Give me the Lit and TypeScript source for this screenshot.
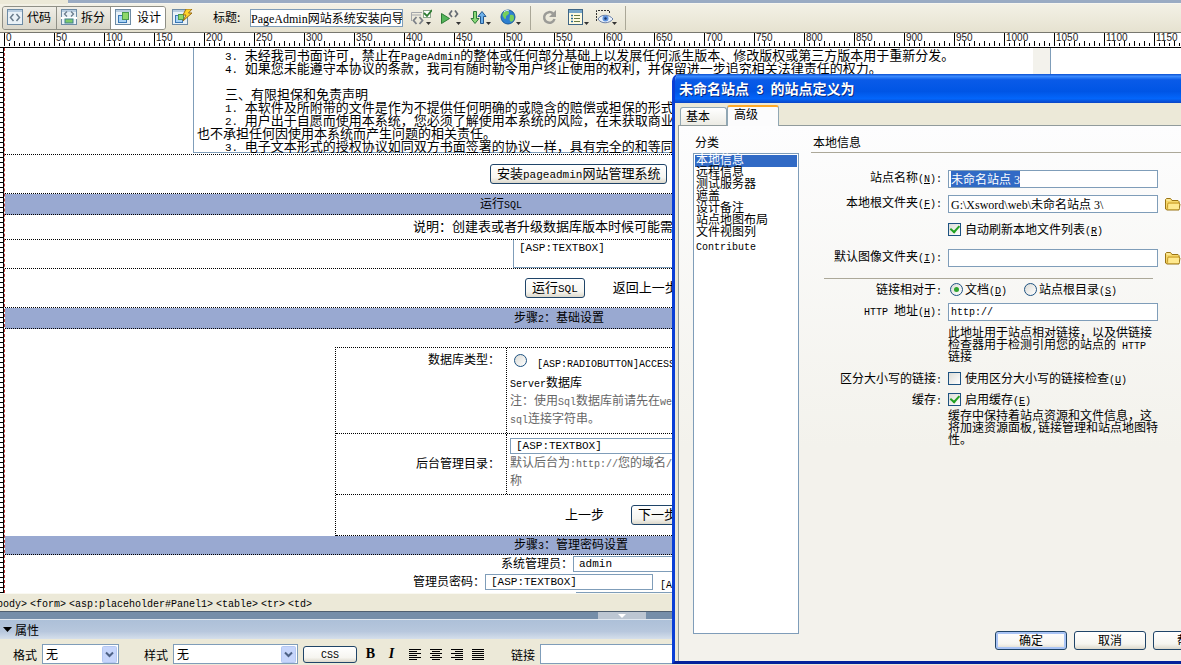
import { LitElement, html, svg, css } from 'lit';
import { customElement, property } from 'lit/decorators.js';

/* Wraps half-width runs so they can be set in the narrow monospaced face. */
const t = (text: string) =>
  html`<span>${text
    .split(/([\x20-\x7e]+)/)
    .map((part) => (/^[\x20-\x7e]+$/.test(part) ? html`<span class="m">${part}</span>` : part))}</span>`;

const key = (text: string, letter: string, tail = '') =>
  html`<span>${t(text)}<span class="m">(<u>${letter}</u>)${tail}</span></span>`;

const base = css`
  * { box-sizing: border-box; }
  .m { font-family: 'Liberation Mono', monospace; font-size: var(--mono, 10px); line-height: 0; white-space: pre; }
  button, input, select, textarea { font: inherit; color: inherit; margin: 0; border-radius: 0; outline: none; }
  svg { display: block; flex: none; }
  .field {
    border: 1px solid #7f9db9; background: #fff; padding: 0 2px; min-width: 0;
    font-family: 'Liberation Mono', 'Noto Sans CJK SC', monospace;
  }
  .mixed { font-family: 'Liberation Serif', 'Noto Sans CJK SC', serif; }
  .push {
    border: 1px solid #1f4468; border-radius: 3px; padding: 0 6px 4px; white-space: nowrap; overflow: hidden;
    background: linear-gradient(#fff, #f6f5f0 70%, #dcd8cb);
  }
`;

const arrow = html`<svg class="arrow" width="15" height="17" viewBox="0 0 15 17" aria-hidden="true">
  <rect x=".5" y=".5" width="14" height="16" rx="1" fill="#c6d5fb" stroke="#b5c8f2" />
  <path d="M4 6.5l3.5 3.5L11 6.5" fill="none" stroke="#4d6185" stroke-width="2" />
</svg>`;

const pageFrame = svg`<rect x=".5" y=".5" width="15" height="15" fill="#e9f1f7" stroke="#6d8ba5"/><path d="M1 2h14" stroke="#b8cde0" stroke-width="2"/>`;
const drop = svg`<path d="M16 13h5l-2.500 3z" fill="#333"/>`;

const icons: Record<string, unknown> = {
  code: svg`${pageFrame}<path d="M6.500 5L3.500 8.500l3 3.500M9.500 5l3 3.500-3 3.500" fill="none" stroke="#6a7c8c" stroke-width="1.500"/>`,
  split: svg`${pageFrame}<path d="M6 2.500L3.500 5 6 7.500M10 2.500L12.500 5 10 7.500" fill="none" stroke="#6a7c8c" stroke-width="1.300"/><rect x="0" y="8" width="16" height="2" fill="#fff"/><rect x="4" y="10" width="8" height="4" fill="#7ecb6b" stroke="#3d7f8c"/>`,
  design: svg`${pageFrame}<rect x="3.500" y="6.500" width="8" height="7" fill="#a9d3f5" stroke="#3a78b5"/><rect x="7.500" y="3.500" width="6" height="7" fill="#8fd86a" stroke="#4b9a4c"/>`,
  live: svg`${pageFrame}<rect x="3.500" y="6.500" width="7" height="7" fill="#a9d3f5" stroke="#3a78b5"/><rect x="6.500" y="5.500" width="5" height="5" fill="#8fd86a" stroke="#4b9a4c"/><path d="M14 0h6l-3.500 4H20l-9 8 3-6h-3z" fill="#ffd42a" stroke="#9a6b12"/>`,
  validate: svg`<path d="M1.500 12V3.500H12M1 6h10" fill="none" stroke="#a4a7ab"/><path d="M6.500 8L3.500 11.500l3 3.500M9.500 8l3 3.500-3 3.500" fill="none" stroke="#7d8288" stroke-width="1.800"/><rect x="13.500" y="1.500" width="7" height="7" fill="#fff" stroke="#8ba48b"/><path d="M14 4l3 3 5-6" fill="none" stroke="#2f7d32" stroke-width="1.800"/>${drop}`,
  run: svg`<path d="M1.500 4.500v10l8-5z" fill="#55b65a" stroke="#2c7a35"/><path d="M12 1.500L9.500 5l2.500 3M15 1.500L17.500 5 15 8" fill="none" stroke="#666c73" stroke-width="1.700"/>${drop}`,
  sync: svg`<path d="M3.500 2.500h3v7H9l-4 5-4-5h2.500z" fill="#8ad977" stroke="#2e7b3a"/><path d="M10.500 14.500v-7H8l4-5 4 5h-2.500v7z" fill="#6db1ea" stroke="#23578f"/>${drop}`,
  globe: svg`<circle cx="8" cy="8" r="7" fill="#2d7fd0" stroke="#185a9c"/><path d="M3 4c3-3 6-2 6 0S6 6 6 8s-1 3-2 1-2-2-1-5zM10 6c3-1 4 0 4 3s-3 5-4 3 0-3 0-6z" fill="#76cf5b"/><path d="M4 3c2-2 4-2 5-1" stroke="#d8f0ff" fill="none"/>${drop}`,
  refresh: svg`<path d="M11 4.500A5.300 5.300 0 1 0 12.500 10" fill="none" stroke="#9b9b97" stroke-width="2.500"/><path d="M14 1v7H7z" fill="#9b9b97"/>`,
  options: svg`<rect x=".5" y=".5" width="14" height="15" fill="#fffbe0" stroke="#3f6686"/><rect x="1" y="1" width="13" height="3" fill="#77a6c9"/><path d="M3 6.500h2M3 9.500h2M3 12.500h2" stroke="#2c6c9a" stroke-width="1.500"/><path d="M6 6.500h6M6 9.500h6M6 12.500h6" stroke="#687b45"/>${drop}`,
  eye: svg`<path d="M.5 12V1.500h13V5" fill="none" stroke="#333" stroke-dasharray="2 1"/><path d="M2 10c3-5 11-5 15 0-4 5-12 5-15 0z" fill="#e9f1fb" stroke="#6a7fa5"/><circle cx="9.500" cy="9.500" r="3" fill="#5f93dd"/><circle cx="9.500" cy="9.500" r="1.200" fill="#19376b"/>${drop}`,
};

const icon = (name: string, w = 22) =>
  html`<svg width=${w} height="17" viewBox="0 0 ${w} 17" aria-hidden="true">${icons[name]}</svg>`;

@customElement('document-toolbar')
class DocumentToolbar extends LitElement {
  static styles = [base, css`
    :host { display: block; flex: none; background: #ece9d8; font-size: 12px; }
    .strip { height: 4px; margin-left: 68px; background: #9aabc3; border-bottom: 1px solid #f7f6ef; }
    .bar { display: flex; align-items: center; height: 29px; padding: 0 0 1px 2px; border-bottom: 1px solid #77776f; background: linear-gradient(#f3f1e6, #e6e2d0); }
    .views { display: flex; height: 24px; border: 1px solid #8f8f86; border-radius: 3px; overflow: hidden; }
    .view { display: flex; align-items: center; gap: 4px; width: 54px; padding: 0 0 0 4px; border: 0; border-right: 1px solid #8f8f86; background: linear-gradient(#f0eee7, #d9d6ca); white-space: nowrap; }
    .view:last-child { border-right: 0; }
    .on { background: #fff; gap: 6px; }
    .caption { padding-bottom: 2px; }
    .tool { border: 0; background: none; padding: 0; }
    .live { margin-left: 6px; }
    .title { margin: 0 8px 0 19px; padding-bottom: 2px; width: 29px; white-space: nowrap; }
    .name { width: 153px; height: 18px; padding: 0; line-height: 16px; }
    .tools { display: flex; gap: 8px; margin-left: 7px; }
    .rule { width: 1px; height: 24px; background: #aaa797; }
    .one { margin: 0 4px 0 8px; }
    .right { margin-left: 10px; gap: 6px; }
    .end { margin-left: 7px; }
  `];
  render() {
    return html`
      <div class="strip"></div>
      <div class="bar">
        <div class="views">
          <button class="view">${icon('code', 16)}<span class="caption">代码</span></button>
          <button class="view">${icon('split', 16)}<span class="caption">拆分</span></button>
          <button class="view on">${icon('design', 16)}<span class="caption">设计</span></button>
        </div>
        <button class="tool live" aria-label="Live">${icon('live')}</button>
        <label class="title" for="title">标题:</label>
        <input id="title" class="field mixed name" value="PageAdmin网站系统安装向导" />
        <div class="tools">
          ${['validate', 'run', 'sync', 'globe'].map((n) => html`<button class="tool" aria-label=${n}>${icon(n)}</button>`)}
        </div>
        <span class="rule one"></span>
        <div class="tools">
          <button class="tool" aria-label="refresh">${icon('refresh', 16)}</button>
        </div>
        <div class="tools right">
          ${['options', 'eye'].map((n) => html`<button class="tool" aria-label=${n}>${icon(n)}</button>`)}
        </div>
        <span class="rule end"></span>
      </div>`;
  }
}

@customElement('pixel-ruler')
class PixelRuler extends LitElement {
  static styles = [base, css`
    :host { display: flex; flex: none; height: 14px; padding-left: 4px; overflow: hidden; background: #fff; border-bottom: 1px solid #000; }
    .step {
      flex: none; width: 50px; height: 13px; padding-left: 1px; border-left: 1px solid #000;
      font: 10px/10px 'Liberation Sans', sans-serif; color: #222;
      background:
        repeating-linear-gradient(90deg, transparent 0 9px, #000 9px 10px) 0 100% / 49px 5px no-repeat,
        repeating-linear-gradient(90deg, transparent 0 4px, #000 4px 5px) 0 100% / 49px 3px no-repeat;
    }
  `];
  render() {
    return html`${Array.from({ length: 24 }, (_, i) => html`<span class="step">${i * 50}</span>`)}`;
  }
}

@customElement('design-page')
class DesignPage extends LitElement {
  static styles = [base, css`
    :host { display: flex; flex: 1; min-height: 0; overflow: hidden; background: #fff; font-size: 12px; }
    .side { flex: none; width: 4px; border-right: 1px solid #000; background: repeating-linear-gradient(transparent 0 4px, #000 4px 5px); }
    .page { flex: 1; min-width: 0; border-left: 1px dashed #b33; margin-right: -1px; }
    .row { display: flex; align-items: center; border-bottom: 1px dotted #000; white-space: nowrap; overflow: hidden; }
    .big { font-size: 13px; --mono: 11px; }
    .first { height: 107px; align-items: flex-start; padding: 0 131px 0 188px; }
    .licence { flex: 1; display: flex; border: 1px solid #7f9db9; border-top: 0; height: 105px; padding-left: 3px; line-height: 13px; }
    .lines { flex: 1; min-width: 0; }
    .lines p { margin: 0; height: 13px; }
    .lines .in { padding-left: 28px; }
    .scroll { width: 17px; background: #f3f2ec; }
    .tall { height: 39px; gap: 28px; }
    .push { height: 20px; line-height: 16px; }
    .band { height: 21px; padding-bottom: 4px; background: #99a9d1; }
    .last { height: 19px; }
    .note { height: 25px; padding: 0 0 4px 408px; }
    .boxrow { height: 29px; padding-left: 508px; align-items: stretch; }
    .area { width: 400px; resize: none; overflow: hidden; padding: 0 5px; border-top: 0; font-size: 11px; line-height: 16px; }
    .setup { margin-left: 330px; margin-top: 18px; border: 1px dotted #000; border-width: 1px 0 0 1px; }
    .pair { display: grid; grid-template-columns: 171px 1fr; border-bottom: 1px dotted #000; line-height: 18px; white-space: nowrap; }
    .name { text-align: right; padding: 2px 6px 0 0; border-right: 1px dotted #000; }
    .mid { align-self: stretch; display: flex; align-items: center; justify-content: flex-end; padding: 0 6px 2px 0; }
    .body { padding: 4px 0 0 3px; }
    .kind { height: 86px; }
    .kind .body { padding-top: 0; }
    .dir { height: 61px; }
    .grey { color: #666; }
    .choice { display: flex; align-items: center; gap: 10px; height: 25px; padding-left: 4px; }
    .choice span { padding-top: 2px; }
    .line { height: 18px; }
    .radio { appearance: none; width: 13px; height: 13px; border: 1px solid #1d5281; border-radius: 50%; background: linear-gradient(135deg, #dcdcd7, #fff); }
    .next { height: 41px; padding-left: 229px; gap: 27px; }
    .text { font-size: 11px; height: 16px; line-height: 14px; padding: 0 5px; }
    .dir .text { display: block; width: 300px; margin-bottom: -1px; }
    .form { display: flex; align-items: center; height: 18px; white-space: nowrap; overflow: hidden; }
    .form > label, a { padding-bottom: 4px; }
    .user { padding-left: 496px; }
    .pass { padding-left: 408px; }
    .pass .text { width: 168px; margin-right: 7px; }
    .again { padding-left: 571px; }
    .p1 { padding-left: 485px; }
    .p2 { padding-left: 475px; }
    .p3 { padding-left: 520px; }
    .p4 { padding-left: 509px; }
    a { color: inherit; text-decoration: none; }
  `];
  render() {
    return html`
      <div class="side"></div>
      <div class="page">
        <div class="row first big">
          <div class="licence">
            <div class="lines">
              <p class="in">${t('3. 未经我司书面许可，禁止在PageAdmin的整体或任何部分基础上以发展任何派生版本、修改版权或第三方版本用于重新分发。')}</p>
              <p class="in">${t('4. 如果您未能遵守本协议的条款，我司有随时勒令用户终止使用的权利，并保留进一步追究相关法律责任的权力。')}</p>
              <p></p>
              <p class="in">三、有限担保和免责声明</p>
              <p class="in">${t('1. 本软件及所附带的文件是作为不提供任何明确的或隐含的赔偿或担保的形式')}</p>
              <p class="in">${t('2. 用户出于自愿而使用本系统，您必须了解使用本系统的风险，在未获取商业')}</p>
              <p>也不承担任何因使用本系统而产生问题的相关责任。</p>
              <p class="in">${t('3. 电子文本形式的授权协议如同双方书面签署的协议一样，具有完全的和等同')}</p>
            </div>
            <div class="scroll"></div>
          </div>
        </div>
        <div class="row tall big p1"><button class="push">${t('安装pageadmin网站管理系统')}</button></div>
        <div class="row band p2">${t('运行SQL')}</div>
        <div class="row note big">说明：创建表或者升级数据库版本时候可能需</div>
        <div class="row boxrow"><textarea class="field area" aria-label="SQL">[ASP:TEXTBOX]</textarea></div>
        <div class="row tall big p3"><button class="push">${t('运行SQL')}</button><a href="#">返回上一步</a></div>
        <div class="row band p4">${t('步骤2：基础设置')}</div>
        <div class="setup">
          <div class="pair kind">
            <div class="name">数据库类型：</div>
            <div class="body">
              <label class="choice"><input class="radio" type="radio" name="db" />${t('[ASP:RADIOBUTTON]ACCESS')}</label>
              <div class="line">${t('Server数据库')}</div>
              <div class="line grey">${t('注：使用Sql数据库前请先在web')}</div>
              <div class="line grey">${t('sql连接字符串。')}</div>
            </div>
          </div>
          <div class="pair dir">
            <label class="name mid" for="dir">后台管理目录：</label>
            <div class="body">
              <input id="dir" class="field text" value="[ASP:TEXTBOX]" />
              <div class="grey">${t('默认后台为:http://您的域名/')}</div>
              <div class="grey">称</div>
            </div>
          </div>
          <div class="row next big"><a href="#">上一步</a><button class="push">下一步</button></div>
        </div>
        <div class="row band last p4">${t('步骤3：管理密码设置')}</div>
        <div class="form user"><label for="user">系统管理员：</label><input id="user" class="field text" value="admin" /></div>
        <div class="form pass"><label for="pass">管理员密码：</label><input id="pass" class="field text" value="[ASP:TEXTBOX]" />${t('[ASP')}</div>
        <div class="form again"><input class="field text" aria-label="确认密码" /></div>
      </div>`;
  }
}

@customElement('property-panel')
class PropertyPanel extends LitElement {
  static styles = [base, css`
    :host { display: block; flex: none; background: #ece9d8; font-size: 12px; }
    .tags { display: flex; align-items: center; height: 18px; padding-bottom: 2px; border-top: 1px solid #faf9f2; overflow: hidden; gap: 3px; }
    .tag { border: 0; background: none; padding: 0; }
    .tag:first-child { margin-left: -9px; }
    .split { display: flex; height: 9px; padding-left: 598px; border-top: 1px solid #4f5f70; border-bottom: 1px solid #dfe7f0; background: #758ea9; }
    .grip { display: flex; justify-content: center; width: 48px; background: #bcc6d2; }
    .head { display: flex; align-items: center; gap: 3px; height: 19px; padding: 0 0 1px 3px; background: linear-gradient(#adc0d8, #b7c7dd 60%, #d5dfeb); }
    .props { display: flex; align-items: center; height: 26px; padding: 4px 0 0 13px; white-space: nowrap; }
    .combo { display: grid; margin: 0 25px 0 5px; }
    .combo > * { grid-area: 1 / 1; }
    .combo select { appearance: none; height: 20px; border: 1px solid #7f9db9; background: #fff; padding: 0 3px; line-height: 16px; }
    .arrow { justify-self: end; align-self: center; margin-right: 2px; pointer-events: none; }
    .format { width: 77px; }
    .style { width: 125px; }
    .link { width: 287px; }
    .push { width: 54px; height: 17px; line-height: 12px; margin-left: -20px; padding-bottom: 2px; }
    .bi { border: 0; background: none; padding: 0; width: 21px; font: bold 14px/16px 'Liberation Serif', serif; }
    .bold { margin-left: 3px; }
    .aligns { display: flex; gap: 9px; margin: 0 27px 0 7px; }
    .aligns button { border: 0; background: none; padding: 0; }
  `];
  render() {
    const aligns = [
      'M0 1.500h12M0 3.500h8M0 5.500h12M0 7.500h8M0 9.500h12M0 11.500h8',
      'M0 1.500h12M2 3.500h8M0 5.500h12M2 7.500h8M0 9.500h12M2 11.500h8',
      'M0 1.500h12M4 3.500h8M0 5.500h12M4 7.500h8M0 9.500h12M4 11.500h8',
      'M0 1.500h12M0 3.500h12M0 5.500h12M0 7.500h12M0 9.500h12M0 11.500h12',
    ];
    return html`
      <div class="tags">
        ${['<body>', '<form>', '<asp:placeholder#Panel1>', '<table>', '<tr>', '<td>'].map((tag) => html`<button class="tag">${t(tag)}</button>`)}
      </div>
      <div class="split"><span class="grip"><svg width="8" height="7" viewBox="0 0 8 7"><path d="M0 2h8L4 6z" fill="#fff" /></svg></span></div>
      <div class="head"><svg width="9" height="7" viewBox="0 0 9 7"><path d="M0 1h9L4.500 6z" fill="#000" /></svg>属性</div>
      <div class="props">
        <label for="format">格式</label>
        <span class="combo"><select id="format" class="format"><option>无</option></select>${arrow}</span>
        <label for="style">样式</label>
        <span class="combo"><select id="style" class="style"><option>无</option></select>${arrow}</span>
        <button class="push">${t('CSS')}</button>
        <button class="bi bold">B</button><button class="bi"><i>I</i></button>
        <div class="aligns">
          ${aligns.map((d, i) => html`<button aria-label="align ${i}"><svg width="12" height="13" viewBox="0 0 12 13"><path d=${d} stroke="#000" /></svg></button>`)}
        </div>
        <label for="link">链接</label>
        <span class="combo"><select id="link" class="link"><option></option></select>${arrow}</span>
      </div>`;
  }
}

@customElement('site-dialog')
class SiteDialog extends LitElement {
  @property({ type: Array }) categories = ['本地信息', '远程信息', '测试服务器', '遮盖', '设计备注', '站点地图布局', '文件视图列', 'Contribute'];

  static styles = [base, css`
    :host { display: flex; flex-direction: column; border: 3px solid #0a3fd6; border-top: 0; border-bottom-color: #04209a; border-radius: 7px 7px 0 0; background: #ece9d8; font-size: 12px; overflow: hidden; }
    .title { flex: none; height: 29px; padding-left: 4px; color: #fff; font-weight: bold; font-size: 14px; line-height: 29px; --mono: 12px; text-shadow: 1px 1px #0a2a80;
      background: linear-gradient(#0a4fd0, #3b8bff 8%, #0a5be8 20%, #0055e5 60%, #0366fb 85%, #0b45c4); }
    .tabs { flex: none; display: flex; align-items: flex-end; height: 22px; padding-left: 5px; }
    .tab { width: 47px; height: 18px; border: 1px solid #91a7b4; border-bottom: 0; border-radius: 3px 3px 0 0; padding: 0 14px 1px 3px; line-height: 16px; background: linear-gradient(#fff, #ecebe4); white-space: nowrap; }
    .current { width: 52px; height: 21px; margin-bottom: -1px; padding: 0 19px 5px 5px; line-height: 14px; border-top: 2px solid #ffa928; background: #fcfcfd; position: relative; }
    .panel { flex: 1; display: flex; flex-direction: column; margin-left: 3px; border: 1px solid #919b9c; border-width: 1px 0 0 1px; background: linear-gradient(#fdfdfe, #f3f2ec 60%); padding: 8px 0 11px 14px; }
    .main { flex: 1; display: flex; gap: 12px; }
    .cats { flex: none; display: flex; flex-direction: column; width: 106px; }
    .cap { height: 19px; line-height: 16px; padding-left: 2px; }
    .list { flex: 1; border: 1px solid #7f9db9; background: #fff; padding: 1px; margin-bottom: -1px; }
    .cat { display: block; height: 12px; line-height: 8px; padding-left: 1px; white-space: nowrap; --mono: 10px; }
    .cat:has(.m) { line-height: 12px; }
    .cat:has(input:checked) { background: #316ac5; color: #fff; }
    .cat input { appearance: none; position: absolute; }
    .info { flex: 1; }
    .info .cap { border-bottom: 1px solid #aca899; }
    .grid { display: grid; grid-template-columns: 131px 210px auto; column-gap: 6px; justify-content: start; white-space: nowrap; }
    .grid > * { min-width: 0; }
    .lab { text-align: right; line-height: 13px; }
    .in { height: 18px; line-height: 16px; font-size: 12px; }
    .http { font-size: 10px; }
    .in::selection { background: #316ac5; color: #fff; }
    .wide { grid-column: 2 / 4; }
    .opt { display: inline-flex; align-items: center; gap: 4px; height: 14px; line-height: 14px; }
    .opts { display: flex; gap: 17px; padding-left: 2px; }
    .opts .opt { gap: 2px; }
    .box { appearance: none; width: 13px; height: 13px; border: 1px solid #1d5281; background: linear-gradient(135deg, #dcdcd7, #fff); display: grid; place-items: center; }
    .round { border-radius: 50%; }
    .round:checked::after { content: ''; width: 5px; height: 5px; border-radius: 50%; background: #2fa52f; }
    .tick:checked::after { content: ''; width: 4px; height: 7px; border: solid #21a121; border-width: 0 2px 2px 0; transform: rotate(42deg) translate(-1px, -1px); }
    .help { margin: 0; line-height: 12px; grid-column: 2 / 4; }
    .sep { grid-column: 1 / 4; margin: 0 28px 0 13px; border-top: 1px solid #aca899; }
    .a { margin-top: 17px; } .b { margin-top: 7px; } .c { margin-top: 9px; } .d { margin-top: 13px; }
    .e { margin-top: 11px; } .f { margin-top: 3px; } .g { margin-top: 5px; }
    .foot { display: flex; gap: 7px; padding-left: 302px; margin-top: -2px; }
    .foot .push { width: 72px; height: 19px; line-height: 15px; }
    .foot .ok { box-shadow: inset 0 0 0 2px #a9c4f5; }
  `];

  firstUpdated() {
    const site = this.renderRoot.querySelector<HTMLInputElement>('#site');
    site?.focus();
    site?.select();
  }

  folder(cls: string) {
    return html`<svg class=${cls} width="17" height="17" viewBox="0 0 17 17" aria-hidden="true">
      <path d="M1.500 14V4.500l1-1h4l1.500 2h6l1 1v1.500l1 1-1 6h-12z" fill="#f6d768" stroke="#9a7416" />
      <path d="M3 14.500l1-6.500h12" fill="none" stroke="#c79b2c" />
      <path d="M4.500 14V9h10.500v5z" fill="#ffe98f" />
      <path d="M2.500 5h4" stroke="#fff6c4" />
    </svg>`;
  }

  render() {
    return html`
      <div class="title">${t('未命名站点 3 的站点定义为')}</div>
      <div class="tabs"><button class="tab">基本</button><button class="tab current">高级</button></div>
      <div class="panel">
        <div class="main">
          <div class="cats">
            <div class="cap" id="cats">分类</div>
            <div class="list" role="radiogroup" aria-labelledby="cats">
              ${this.categories.map((c, i) => html`<label class="cat"><input type="radio" name="cat" ?checked=${i === 0} />${t(c)}</label>`)}
            </div>
          </div>
          <div class="info">
            <div class="cap">本地信息</div>
            <div class="grid">
              <label class="lab a" for="site">${key('站点名称', 'N', ':')}</label>
              <input id="site" class="field mixed in a" value="未命名站点 3" /><span></span>
              <label class="lab b" for="root">${key('本地根文件夹', 'F', ':')}</label>
              <input id="root" class="field mixed in b" value="G:\\Xsword\\web\\未命名站点 3\\" />${this.folder('b')}
              <label class="opt wide c"><input class="box tick" type="checkbox" checked />${key('自动刷新本地文件列表', 'R')}</label>
              <label class="lab d" for="img">${key('默认图像文件夹', 'I', ':')}</label>
              <input id="img" class="field in d" />${this.folder('d')}
              <div class="sep e"></div>
              <span class="lab f">${t('链接相对于:')}</span>
              <div class="opts wide f">
                <label class="opt"><input class="box round" type="radio" name="rel" checked />${key('文档', 'D')}</label>
                <label class="opt"><input class="box round" type="radio" name="rel" />${key('站点根目录', 'S')}</label>
              </div>
              <label class="lab b" for="http">${key('HTTP 地址', 'H', ':')}</label>
              <input id="http" class="field in http b" value="http://" /><span></span>
              <p class="help g">${t('此地址用于站点相对链接，以及供链接')}<br />${t('检查器用于检测引用您的站点的 HTTP')}<br />链接</p>
              <span class="lab c">${t('区分大小写的链接:')}</span>
              <label class="opt wide c"><input class="box tick" type="checkbox" />${key('使用区分大小写的链接检查', 'U')}</label>
              <span class="lab b">${t('缓存:')}</span>
              <label class="opt wide b"><input class="box tick" type="checkbox" checked />${key('启用缓存', 'E')}</label>
              <p class="help f">缓存中保持着站点资源和文件信息，这<br />${t('将加速资源面板,链接管理和站点地图特')}<br />性。</p>
            </div>
          </div>
        </div>
        <div class="foot"><button class="push ok">确定</button><button class="push">取消</button><button class="push">帮助</button></div>
      </div>`;
  }
}

@customElement('app-root')
class AppRoot extends LitElement {
  static styles = css`
    :host { display: flex; flex-direction: column; position: relative; height: 100vh; overflow: hidden; color: #000; font-family: 'Noto Sans CJK SC', sans-serif; font-size: 12px; }
    .dialog { position: absolute; left: 672px; top: 74px; width: 560px; height: 587px; }
  `;
  render() {
    return html`
      <document-toolbar></document-toolbar>
      <pixel-ruler></pixel-ruler>
      <design-page></design-page>
      <property-panel></property-panel>
      <site-dialog class="dialog" role="dialog"></site-dialog>`;
  }
}
